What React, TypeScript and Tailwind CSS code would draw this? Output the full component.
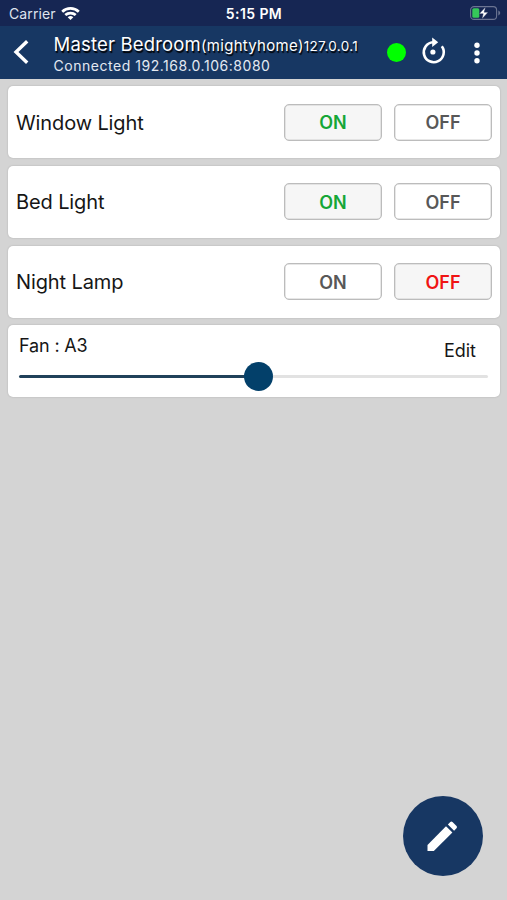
import React, { useState } from "react";

interface DeviceSwitchProps {
    name: string;
    initialOn: boolean;
}

const DeviceSwitch: React.FC<DeviceSwitchProps> = ({ name, initialOn }) => {
    const [isOn, setIsOn] = useState(initialOn);
    const base = "flex h-[37px] w-[98px] items-center justify-center rounded-[5px] border border-[#bcbcbc] pt-px text-[18px] font-semibold shadow-[inset_0_0_0_0.5px_#d0d0d0]";
    return (
        <div className="flex h-[72px] items-center justify-between rounded-[5px] bg-white pl-2 pr-2 shadow-[0_0_2px_rgba(0,0,0,0.2)]">
            <span className="pt-px text-[20px] tracking-[-0.12px] text-[#161616]">{name}</span>
            <div className="flex gap-3">
                <button
                    onClick={() => setIsOn(true)}
                    className={`${base} ${isOn ? "bg-[#f6f6f6] text-[#16a637]" : "bg-white text-[#585858]"}`}
                >
                    ON
                </button>
                <button
                    onClick={() => setIsOn(false)}
                    className={`${base} ${isOn ? "bg-white text-[#585858]" : "bg-[#f6f6f6] text-[#f01414]"}`}
                >
                    OFF
                </button>
            </div>
        </div>
    );
};

const StatusBar = () => (
    <div className="grid h-[26px] grid-cols-3 items-center bg-[#162653] pl-[7px] pr-[6px] pt-px text-white">
        <div className="flex items-center gap-[5px] pl-[2px] text-[#dfe3ee]">
            <span className="text-[14px] tracking-[0.1px]">Carrier</span>
            <svg width="19" height="14" viewBox="0 0 19 14" fill="none" stroke="#fff" strokeWidth="2.7">
                <path d="M1.2 4.8a12 12 0 0 1 16.6 0" />
                <path d="M4.3 8.1a7.6 7.6 0 0 1 10.4 0" />
                <path d="M9.5 13.1 6.7 10.3a4 4 0 0 1 5.6 0z" fill="#fff" stroke="none" />
            </svg>
        </div>
        <span className="text-center text-[14px] font-semibold tracking-[0.4px]">5:15 PM</span>
        <svg className="mb-px justify-self-end" width="31" height="14" viewBox="0 0 31 14">
            <rect x="0.6" y="0.6" width="26" height="12.8" rx="3.5" fill="none" stroke="#6b7492" strokeWidth="1.1" />
            <path d="M28.3 4.6v4.8c2.5-.7 2.5-4.1 0-4.8z" fill="#6b7492" />
            <rect x="2.3" y="2.3" width="7" height="9.4" rx="1.5" fill="#35c759" />
            <path d="M15.6 1 9.2 7.8h4l-1.3 5.2 6.2-6.8h-4z" fill="#fff" stroke="#162653" strokeWidth="0.4" />
        </svg>
    </div>
);

const Header = () => (
    <header className="flex h-[53px] items-center bg-[#173763] text-white">
        <svg className="mb-[2px] ml-3" width="18" height="26" viewBox="0 0 18 26" fill="none" stroke="#fff" strokeWidth="3.4">
            <path d="M15.2 2.2 4 13l11.2 10.8" />
        </svg>
        <div className="ml-[23.5px] w-[333px] whitespace-nowrap pt-px">
            <div className="leading-[22px] [text-shadow:1px_1.5px_1px_#000]">
                <span className="text-[18.5px] tracking-[0.18px]">Master Bedroom</span>
                <span className="text-[15px] tracking-[0.3px]">(mightyhome)</span>
                <span className="text-[13.5px] tracking-[0.35px]">127.0.0.1</span>
            </div>
            <div className="text-[14px] leading-[17px] tracking-[0.53px] text-[#e3e9f2]">Connected 192.168.0.106:8080</div>
        </div>
        <div className="size-[19px] rounded-full bg-[#00ff00]" />
        <svg className="mb-[4px] ml-[13.5px]" width="28" height="30" viewBox="0 0 28 30" fill="none">
            <path d="M22.8 10.2A10 10 0 1 1 14 6.2" stroke="#fff" strokeWidth="2.6" />
            <path d="M13.2 1.5 19.2 6.2l-6 4.7z" fill="#fff" />
            <circle cx="13.9" cy="16" r="2.6" fill="#fff" />
        </svg>
        <svg className="ml-[26.5px]" width="6" height="22" viewBox="0 0 6 22" fill="#fff">
            <circle cx="3" cy="3.3" r="2.7" />
            <circle cx="3" cy="11" r="2.7" />
            <circle cx="3" cy="18.7" r="2.7" />
        </svg>
    </header>
);

const FanCard = () => {
    const value = 51;
    return (
        <div className="h-[72px] rounded-[5px] bg-white pl-[11px] pr-3 shadow-[0_0_2px_rgba(0,0,0,0.2)]">
            <div className="flex h-9 justify-between pr-3 text-[18px] text-[#161616]">
                <span className="pt-[7px] tracking-[-0.15px]">Fan : A3</span>
                <span className="pt-3">Edit</span>
            </div>
            <div className="flex h-[30px] items-center">
                <div className="h-[3.5px] rounded-l-full bg-[#20415a]" style={{ width: `${value}%` }} />
                <div className="-ml-[14.5px] size-[29.5px] shrink-0 rounded-full bg-[#03406a]" />
                <div className="mt-px h-[3px] flex-1 rounded-r-full bg-[#e2e2e2]" />
            </div>
        </div>
    );
};

export default function App() {
    return (
        <div className="flex h-[900px] w-[507px] flex-col overflow-hidden bg-[#d4d4d4] font-['Inter',sans-serif]">
            <StatusBar />
            <Header />
            <main className="flex flex-1 flex-col gap-[7.8px] pl-2 pr-[7px] pt-[7px]">
                <DeviceSwitch name="Window Light" initialOn={true} />
                <DeviceSwitch name="Bed Light" initialOn={true} />
                <DeviceSwitch name="Night Lamp" initialOn={false} />
                <FanCard />
            </main>
            <button className="mb-6 mr-6 flex size-20 items-center justify-center self-end rounded-full bg-[#173763]">
                <svg width="32" height="32" viewBox="0 0 32 32" fill="#fff">
                    <path d="M0.5 25 19 6.3l6.4 6.2L6.8 31H0.5z" />
                    <path d="m20.9 4.5 2.4-2.4q1.1-1.1 2.2 0l4 4q1.1 1.1 0 2.1l-2.4 2.5z" />
                </svg>
            </button>
        </div>
    );
}
